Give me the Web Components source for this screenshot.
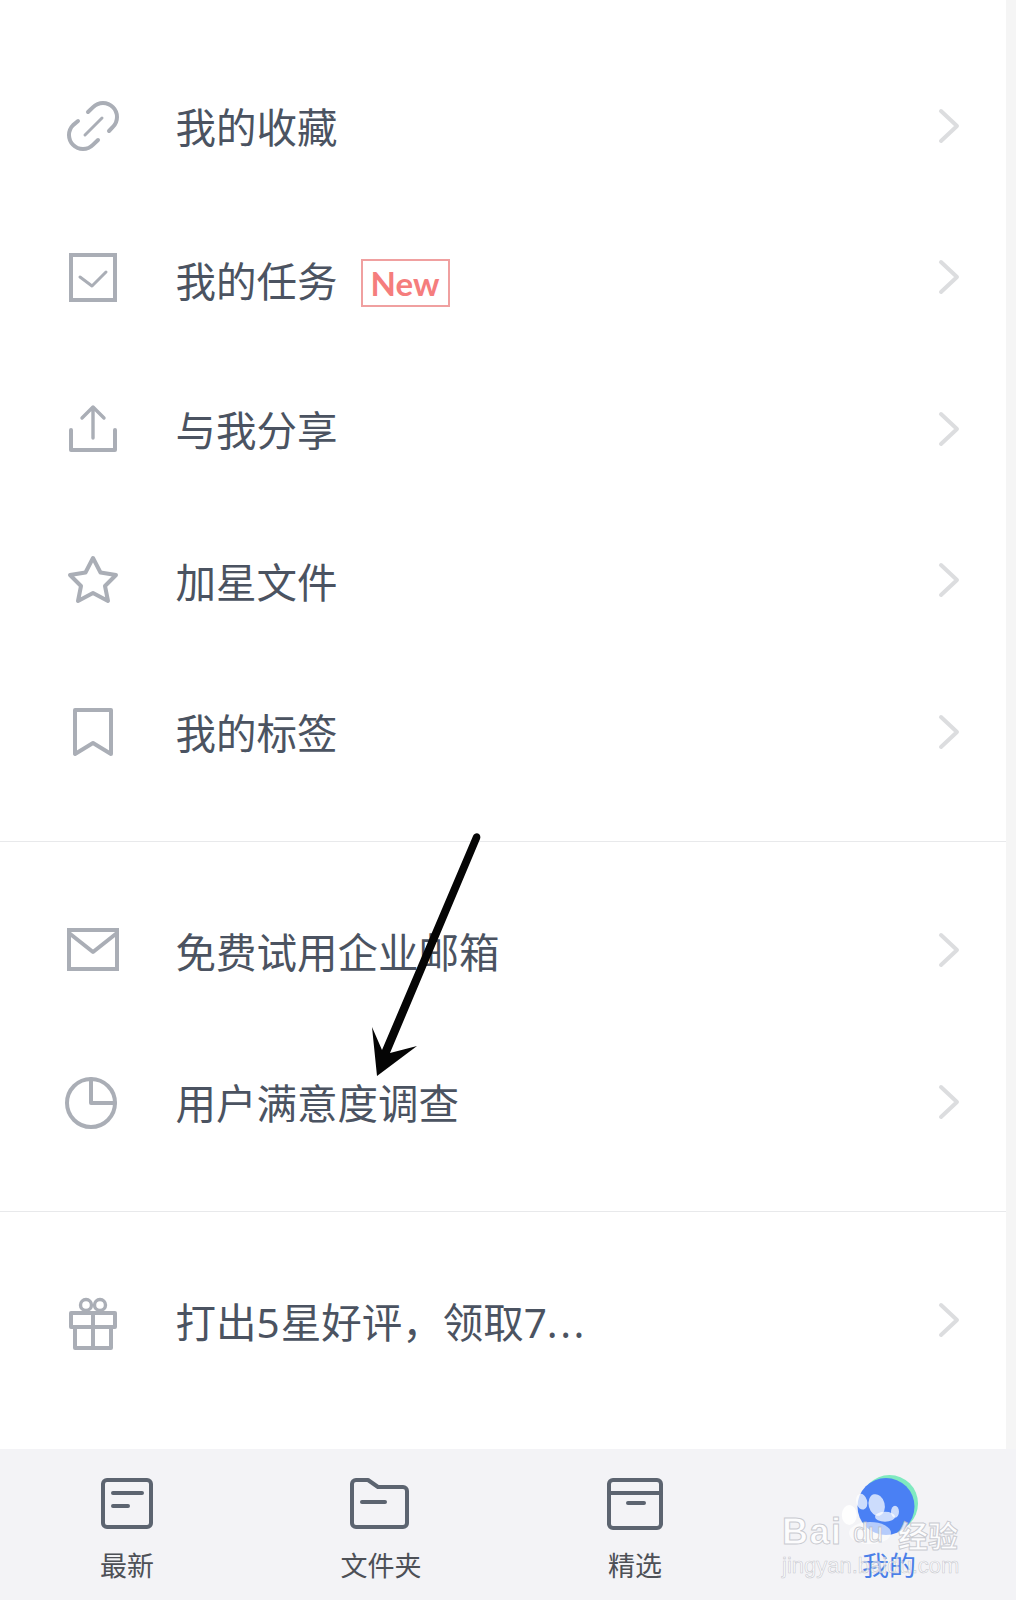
<!DOCTYPE html>
<html lang="zh-CN">
<head>
<meta charset="utf-8">
<title>我的</title>
<style>
    html, body { margin: 0; padding: 0; background: #fff; }
    body { font-family: "Noto Sans", "Noto Sans CJK SC", sans-serif; }
    svg.ico { fill: none; stroke: #aaaeb6; stroke-width: 4; stroke-linecap: round; stroke-linejoin: round; }
    svg.tab { fill: none; stroke: #5c6470; stroke-width: 4; stroke-linecap: round; stroke-linejoin: round; }
</style>
</head>
<body>
<my-page>
    <menu-group style="--top: 50px; --bottom: 33px;" divider>
        <menu-row>
            <svg slot="icon" class="ico" width="64" height="64" viewBox="0 0 64 64"><path d="M48 37l3.900-4.100A14 14 0 0 0 32.100 13.100L27 18"/><path d="M17 27l-4.900 4.100A14 14 0 0 0 31.900 50.900L37 46"/><path d="M24 41l17-17" stroke-width="3"/></svg>
            我的收藏
        </menu-row>
        <menu-row style="--nudge: 10px;">
            <svg slot="icon" class="ico" width="64" height="64" viewBox="0 0 64 64"><rect x="10" y="10" width="44" height="45" stroke-linejoin="miter"/><path d="M19 32l12 9 14-14" stroke-width="3"/></svg>
            我的任务
            <new-badge slot="badge">New</new-badge>
        </menu-row>
        <menu-row>
            <svg slot="icon" class="ico" width="64" height="64" viewBox="0 0 64 64"><path d="M10 33v20h44V33"/><path d="M32 41V10M21 21l11-11 11 11" stroke-width="3.400"/></svg>
            与我分享
        </menu-row>
        <menu-row>
            <svg slot="icon" class="ico" width="64" height="64" viewBox="0 0 64 64"><path d="M32 10l7.500 14.500L55 27 44 38l3 15-15-8-15 8 3-15L9 27l15.500-2.500z"/></svg>
            加星文件
        </menu-row>
        <menu-row>
            <svg slot="icon" class="ico" width="64" height="64" viewBox="0 0 64 64"><path d="M14 10h36v44L32 43 14 54z"/></svg>
            我的标签
        </menu-row>
    </menu-group>
    <menu-group style="--top: 33px; --bottom: 33px;" divider>
        <menu-row>
            <svg slot="icon" class="ico" width="64" height="64" viewBox="0 0 64 64"><rect x="8" y="12" width="48" height="39" stroke-linejoin="miter"/><path d="M8 15l24 19 24-19"/></svg>
            免费试用企业邮箱
        </menu-row>
        <menu-row>
            <svg slot="icon" class="ico" width="64" height="64" viewBox="0 0 64 64"><circle cx="30" cy="33" r="24"/><path d="M30 9v24h24"/></svg>
            用户满意度调查
        </menu-row>
    </menu-group>
    <menu-group style="--top: 33px; --bottom: 0px;">
        <menu-row>
            <svg slot="icon" class="ico" width="64" height="64" viewBox="0 0 64 64"><path d="M10 25h44v14H10zM14 39v21h36V39M32 25v35"/><circle cx="25" cy="17" r="5.500" stroke-width="3.400"/><circle cx="39" cy="17" r="5.500" stroke-width="3.400"/></svg>
            打出<span style="letter-spacing: 1px;">5</span>星好评，领取7<span style="letter-spacing: 2.500px;">...</span>
        </menu-row>
    </menu-group>
    <tab-bar slot="bar">
        <tab-item>
            <svg slot="icon" class="tab" width="64" height="64" viewBox="0 0 64 64"><rect x="8" y="8" width="48" height="47" rx="4"/><path d="M18 21h29M18 34h15"/></svg>
            最新
        </tab-item>
        <tab-item>
            <svg slot="icon" class="tab" width="64" height="64" viewBox="0 0 64 64"><path d="M7 8h12l10 7h25a4 4 0 0 1 4 4v32a4 4 0 0 1-4 4H7a4 4 0 0 1-4-4V12a4 4 0 0 1 4-4z"/><path d="M13 30h23"/></svg>
            文件夹
        </tab-item>
        <tab-item>
            <svg slot="icon" class="tab" width="64" height="64" viewBox="0 0 64 64"><rect x="6" y="8" width="52" height="48" rx="4"/><path d="M6 21h52M25 31h16"/></svg>
            精选
        </tab-item>
        <tab-item active>
            <svg slot="icon" width="64" height="64" viewBox="0 0 64 64"><circle cx="32.500" cy="31.500" r="28.500" fill="#7fe9c0"/><circle cx="29" cy="34.500" r="28.500" fill="#4a80f4"/></svg>
            我的
        </tab-item>
    </tab-bar>
    <baidu-mark slot="over"></baidu-mark>
    <arrow-note slot="over"></arrow-note>
</my-page>

<script>
class MyPage extends HTMLElement {
    constructor() {
        super();
        const shadow = this.attachShadow({ mode: 'open' });
        shadow.innerHTML = `
            <style>
                :host {
                    display: grid;
                    grid-template-rows: 1449px 151px;
                    width: 1016px;
                    height: 1600px;
                    position: relative;
                    overflow: hidden;
                    background: #fff;
                }
                .top {
                    display: grid;
                    grid-template-columns: 1006px 10px;
                }
                .gutter { background: #f5f5f5; }
            </style>
            <div class="top">
                <div class="list"><slot></slot></div>
                <div class="gutter"></div>
            </div>
            <slot name="bar"></slot>
            <slot name="over"></slot>
        `;
    }
}

class MenuGroup extends HTMLElement {
    constructor() {
        super();
        const shadow = this.attachShadow({ mode: 'open' });
        shadow.innerHTML = `
            <style>
                :host {
                    display: block;
                    padding: var(--top, 0) 0 var(--bottom, 0);
                }
                :host([divider]) { border-bottom: 1px solid #e8e9eb; }
            </style>
            <slot></slot>
        `;
    }
}

class MenuRow extends HTMLElement {
    constructor() {
        super();
        const shadow = this.attachShadow({ mode: 'open' });
        shadow.innerHTML = `
            <style>
                :host {
                    display: flex;
                    align-items: center;
                    height: 151.5px;
                    padding: 0 45px 0 61px;
                    box-sizing: border-box;
                }
                .icon { width: 64px; height: 64px; flex: none; }
                .label {
                    margin-left: 50.5px;
                    font-size: 40.5px;
                    line-height: 56px;
                    color: #4b5361;
                    padding-top: var(--nudge, 5px);
                    white-space: nowrap;
                }
                .badge { margin: 12px 0 0 23px; display: flex; }
                .arrow { margin-left: auto; flex: none; }
            </style>
            <div class="icon"><slot name="icon"></slot></div>
            <div class="label"><slot></slot></div>
            <div class="badge"><slot name="badge"></slot></div>
            <svg class="arrow" width="24" height="38" viewBox="0 0 24 38" fill="none" stroke="#dcdddf" stroke-width="4" stroke-linecap="round" stroke-linejoin="round">
                <path d="M4 4l16 15L4 34"/>
            </svg>
        `;
    }
}

class NewBadge extends HTMLElement {
    constructor() {
        super();
        const shadow = this.attachShadow({ mode: 'open' });
        shadow.innerHTML = `
            <style>
                :host {
                    display: flex;
                    align-items: center;
                    justify-content: center;
                    width: 89px;
                    height: 48px;
                    box-sizing: border-box;
                    border: 2px solid #f0a0a0;
                    color: #f57d7d;
                    font-family: Lato, sans-serif;
                    font-weight: 700;
                    font-size: 33px;
                    line-height: 1;
                }
            </style>
            <slot></slot>
        `;
    }
}

class TabBar extends HTMLElement {
    constructor() {
        super();
        const shadow = this.attachShadow({ mode: 'open' });
        shadow.innerHTML = `
            <style>
                :host {
                    display: grid;
                    grid-template-columns: repeat(4, 254px);
                    background: #f3f3f6;
                }
            </style>
            <slot></slot>
        `;
    }
}

class TabItem extends HTMLElement {
    constructor() {
        super();
        const shadow = this.attachShadow({ mode: 'open' });
        shadow.innerHTML = `
            <style>
                :host {
                    display: flex;
                    flex-direction: column;
                    align-items: center;
                    padding-top: 23px;
                    color: #4d5056;
                    font-size: 27px;
                }
                :host([active]) { color: #4a7fe8; }
                .icon { width: 64px; height: 64px; }
                .label { line-height: 36px; margin-top: 12px; }
            </style>
            <div class="icon"><slot name="icon"></slot></div>
            <div class="label"><slot></slot></div>
        `;
    }
}

// watermark sits on top of the last tab
class BaiduMark extends HTMLElement {
    constructor() {
        super();
        const shadow = this.attachShadow({ mode: 'open' });
        shadow.innerHTML = `
            <style>
                :host {
                    position: absolute;
                    left: 776px;
                    top: 1474px;
                    width: 190px;
                    height: 110px;
                    color: rgba(255, 255, 255, 0.82);
                    font-family: "Liberation Sans", sans-serif;
                    pointer-events: none;
                }
                .paw { position: absolute; left: 0; top: 0; }
                .bai, .du, .cn, .url {
                    position: absolute;
                    white-space: nowrap;
                    -webkit-text-stroke: 1px rgba(180, 182, 190, 0.7);
                }
                .bai { left: 6px; top: 40px; font-size: 36px; line-height: 36px; letter-spacing: 1.5px; font-weight: 700; }
                .du { left: 77px; top: 46px; font-size: 27px; line-height: 27px; }
                .cn { left: 122px; top: 42px; font-family: "Noto Sans CJK SC", sans-serif; font-size: 30px; line-height: 36px; font-weight: 700; }
                .url { left: 6px; top: 78px; font-size: 22px; line-height: 28px; -webkit-text-stroke-width: .6px; color: rgba(255, 255, 255, .6); }
            </style>
            <svg class="paw" width="190" height="110" viewBox="0 0 190 110">
                <g fill="rgba(255,255,255,.72)">
                    <ellipse cx="100.700" cy="31" rx="8" ry="11" transform="rotate(-15 100.700 31)"/>
                    <ellipse cx="85.700" cy="27.700" rx="5.500" ry="8" transform="rotate(-15 85.700 27.700)"/>
                    <ellipse cx="73.300" cy="41" rx="7.500" ry="10" fill="rgba(255,255,255,.9)"/>
                    <ellipse cx="119" cy="37.700" rx="4" ry="6"/>
                    <ellipse cx="109" cy="42.700" rx="10" ry="5"/>
                    <ellipse cx="94" cy="59" rx="21" ry="11" fill="rgba(255,255,255,.6)"/>
                </g>
            </svg>
            <div class="bai">Bai</div>
            <div class="du">du</div>
            <div class="cn">经验</div>
            <div class="url">jingyan.baidu.com</div>
        `;
    }
}

// hand drawn arrow laid over the screenshot
class ArrowNote extends HTMLElement {
    constructor() {
        super();
        const shadow = this.attachShadow({ mode: 'open' });
        shadow.innerHTML = `
            <style>
                :host { position: absolute; left: 360px; top: 825px; pointer-events: none; }
                svg { display: block; }
            </style>
            <svg width="130" height="260" viewBox="0 0 130 260">
                <path d="M113 11C115 6 122 8 120 14L30 228l27-7-40 30-5-49 10 23z" fill="#050505"/>
            </svg>
        `;
    }
}

customElements.define('my-page', MyPage);
customElements.define('menu-group', MenuGroup);
customElements.define('menu-row', MenuRow);
customElements.define('new-badge', NewBadge);
customElements.define('tab-bar', TabBar);
customElements.define('tab-item', TabItem);
customElements.define('baidu-mark', BaiduMark);
customElements.define('arrow-note', ArrowNote);
</script>
</body>
</html>
